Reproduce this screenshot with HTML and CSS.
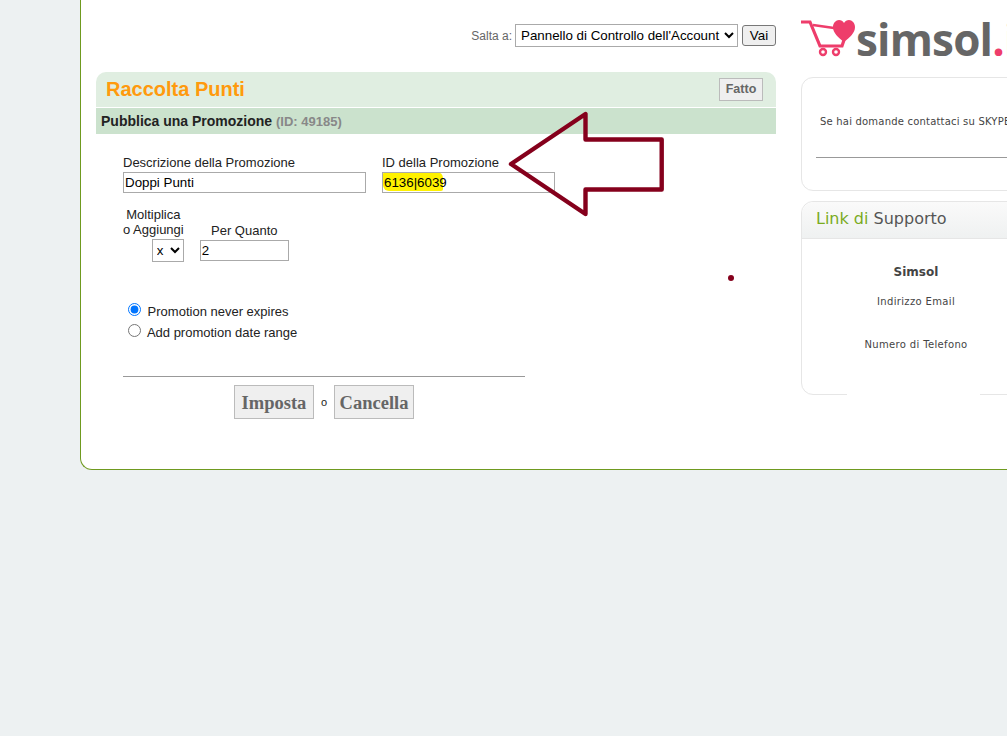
FILE: index.html
```html
<!DOCTYPE html>
<html lang="it">
<head>
    <meta charset="UTF-8">
    <meta name="viewport" content="width=device-width, initial-scale=1.0">
    <title>Raccolta Punti - Simsol</title>
    <link rel="stylesheet" href="styles.css">
</head>
<body>
    <div class="card">
        <div class="main">
            <form class="jump">
                <label class="jump-label" for="jump-select">Salta a:</label>
                <select id="jump-select" class="jump-select">
                    <option>Pannello di Controllo dell'Account</option>
                </select>
                <button type="button" class="jump-btn">Vai</button>
            </form>

            <div class="panel-title">
                <h1>Raccolta Punti</h1>
                <a href="#" class="done-btn">Fatto</a>
            </div>
            <div class="panel-sub">Pubblica una Promozione <span class="panel-id">(ID: 49185)</span></div>

            <form class="promo">
                <div class="promo-row">
                    <div class="field">
                        <label for="promo-name">Descrizione della Promozione</label>
                        <input id="promo-name" class="text-input name-input" type="text" value="Doppi Punti">
                    </div>
                    <div class="field">
                        <label for="promo-id">ID della Promozione</label>
                        <div class="id-wrap">
                            <span class="marker"></span>
                            <input id="promo-id" class="text-input id-input" type="text" value="6136|6039">
                        </div>
                    </div>
                </div>

                <div class="promo-row multiply-row">
                    <div class="field multiply">
                        <label for="promo-mode">Moltiplica<br>o Aggiungi</label>
                        <select id="promo-mode" class="mode-select">
                            <option>x</option>
                        </select>
                    </div>
                    <div class="field amount">
                        <label for="promo-amount">Per Quanto</label>
                        <input id="promo-amount" class="text-input amount-input" type="text" value="2">
                    </div>
                </div>

                <div class="dates">
                    <label class="radio"><input type="radio" name="range" checked> Promotion never expires</label>
                    <label class="radio"><input type="radio" name="range"> Add promotion date range</label>
                </div>

                <div class="actions">
                    <button type="button" class="big-btn">Imposta</button>
                    <span class="or">o</span>
                    <button type="button" class="big-btn">Cancella</button>
                </div>
            </form>
        </div>

        <aside class="side">
            <div class="logo">
                <svg class="logo-cart" width="54" height="40" viewBox="0 0 54 40">
                    <path d="M0 3H9L19 27H41L43 21" fill="none" stroke="#ee3d6b" stroke-width="3.2"/>
                    <path d="M12 6L33 9" fill="none" stroke="#ee3d6b" stroke-width="2.4"/>
                    <circle cx="22" cy="33" r="3" fill="none" stroke="#ee3d6b" stroke-width="2.4"/>
                    <circle cx="35" cy="33" r="3" fill="none" stroke="#ee3d6b" stroke-width="2.4"/>
                    <path d="M43 23C37 18 32 14 32 8C32 4 35 1 38 1C40 1 42 2 43 4C44 2 46 1 48 1C51 1 54 4 54 8C54 14 49 18 43 23Z" fill="#ee3d6b"/>
                </svg>
                <span class="logo-text">simsol<span class="logo-dot">.it</span></span>
            </div>

            <div class="box box-skype">
                <p>Se hai domande contattaci su SKYPE</p>
                <hr class="box-rule">
            </div>

            <div class="box box-support">
                <h2 class="box-head"><span class="green">Link di</span> Supporto</h2>
                <div class="support-body">
                    <h3>Simsol</h3>
                    <p class="support-email">Indirizzo Email</p>
                    <p class="support-phone">Numero di Telefono</p>
                </div>
            </div>
        </aside>
    </div>

    <!-- annotation drawn on the screenshot -->
    <svg class="arrow" width="170" height="120" viewBox="0 0 170 120">
        <path d="M3 54L77.5 4V29.5H153.7V79.5H77.5V104Z" fill="none" stroke="#85001c" stroke-width="4.4" stroke-linejoin="round"/>
    </svg>
    <span class="dot"></span>
</body>
</html>
```

FILE: styles.css
```css
* {
    margin: 0;
    padding: 0;
    box-sizing: border-box;
}

html, body {
    height: 736px;
    overflow: hidden;
}

body {
    font-family: "Liberation Sans", Arial, sans-serif;
    background: #edf1f2;
    color: #222;
    position: relative;
}

.card {
    display: flex;
    width: 1100px;
    height: 490px;
    margin: -20px 0 0 80px;
    padding-top: 20px;
    background: #fff;
    border: 1px solid #6f9a1f;
    border-right: none;
    border-radius: 12px;
}

.main {
    width: 695px;
    padding-left: 15px;
}

.jump {
    display: flex;
    justify-content: flex-end;
    align-items: center;
    height: 23px;
    margin-top: 23px;
}

.jump-label {
    font-size: 12px;
    color: #666;
    margin-right: 3px;
}

.jump-select {
    width: 223px;
    height: 23px;
    padding-left: 1px;
    font-family: "Liberation Sans", Arial, sans-serif;
    font-size: 13.33px;
    color: #000;
    background: #fff;
    border: 1px solid #aaa;
}

.jump-btn {
    width: 34px;
    height: 21px;
    margin-left: 4px;
    font-family: "Liberation Sans", Arial, sans-serif;
    font-size: 13.33px;
    color: #000;
    background: #efefef;
    border: 1px solid #777;
    border-radius: 3px;
}

.panel-title {
    display: flex;
    justify-content: space-between;
    align-items: center;
    height: 35px;
    margin-top: 25px;
    padding: 0 13px 0 10px;
    background: #e0eee1;
    border-radius: 10px 10px 0 0;
}

.panel-title h1 {
    font-size: 20px;
    font-weight: bold;
    color: #ff9a0d;
}

.done-btn {
    display: block;
    width: 44px;
    height: 23px;
    line-height: 21px;
    text-align: center;
    font-size: 12.5px;
    font-weight: bold;
    color: #666;
    text-decoration: none;
    background: #efefef;
    border: 1px solid #bbb;
}

.panel-sub {
    height: 26px;
    line-height: 26px;
    margin-top: 1px;
    padding-left: 5px;
    font-size: 14px;
    font-weight: bold;
    color: #222;
    background: #cbe2cd;
}

.panel-id {
    font-size: 13px;
    color: #888;
}

.promo {
    width: 432px;
    padding: 21px 0 0 27px;
    font-size: 13px;
}

.promo-row {
    display: flex;
    gap: 16px;
}

.field {
    display: flex;
    flex-direction: column;
}

.field label {
    line-height: 15px;
    color: #222;
}

.text-input {
    height: 21px;
    margin-top: 2px;
    font-family: "Liberation Sans", Arial, sans-serif;
    font-size: 13.33px;
    color: #000;
    padding: 0 1px;
    background: transparent;
    border: 1px solid #aaa;
}

.name-input {
    width: 243px;
}

.id-wrap {
    position: relative;
}

.id-input {
    position: relative;
    display: block;
    width: 173px;
}

.marker {
    position: absolute;
    left: 1px;
    top: 2px;
    width: 60px;
    height: 19px;
    background: #fff200;
    border-radius: 2px 6px 2px 6px;
}

.multiply-row {
    margin-top: 14px;
}

.multiply {
    align-items: flex-end;
    text-align: center;
}

.mode-select {
    width: 32px;
    height: 23px;
    margin-top: 2px;
    font-family: "Liberation Sans", Arial, sans-serif;
    font-size: 13.33px;
    color: #000;
    background: #fff;
    border: 1px solid #aaa;
}

.amount {
    justify-content: flex-end;
    text-align: center;
}

.amount-input {
    width: 89px;
    margin-bottom: 1px;
    background: #fff;
}

.dates {
    margin-top: 39px;
}

.radio {
    display: block;
    padding-left: 5px;
    height: 21px;
    line-height: 21px;
    color: #222;
}

.radio input {
    width: 13px;
    height: 13px;
    margin-right: 3px;
    vertical-align: 0;
}

.actions {
    display: flex;
    justify-content: center;
    align-items: center;
    gap: 7px;
    width: 402px;
    margin-top: 33px;
    padding-top: 8px;
    border-top: 1px solid #999;
}

.big-btn {
    width: 80px;
    height: 34px;
    padding-top: 2px;
    font-family: "Liberation Serif", "Times New Roman", serif;
    font-size: 18.5px;
    font-weight: bold;
    color: #666;
    background: #efefef;
    border: 1px solid #bbb;
}

.or {
    font-size: 11px;
    width: 6px;
}

.side {
    width: 230px;
    margin-left: 25px;
    font-family: "DejaVu Sans", Verdana, sans-serif;
    color: #444;
}

.logo {
    display: flex;
    align-items: center;
    height: 40px;
    margin-top: 18px;
    white-space: nowrap;
}

.logo-cart {
    flex: none;
}

.logo-text {
    margin-left: 1px;
    font-family: "Open Sans", sans-serif;
    font-size: 44px;
    font-weight: 700;
    line-height: 40px;
    letter-spacing: -0.8px;
    color: #666;
}

.logo-dot {
    color: #ee3d6b;
}

.box {
    position: relative;
    background: #fff;
    border: 1px solid #e6e6e6;
    border-radius: 12px;
}

.box-skype {
    height: 114px;
    margin-top: 18px;
    padding: 37px 0 0 14px;
}

.box-skype p {
    font-size: 10px;
    line-height: 14px;
    letter-spacing: 0.2px;
    padding-left: 4px;
    white-space: nowrap;
    overflow: hidden;
}

.box-rule {
    margin-top: 28px;
    border: none;
    border-top: 1px solid #999;
}

.box-support {
    height: 194px;
    margin-top: 10px;
}

/* white strip that breaks the bottom border */
.box-support::after {
    content: "";
    position: absolute;
    left: 45px;
    bottom: -1px;
    width: 133px;
    height: 1px;
    background: #fff;
}

.box-head {
    height: 37px;
    line-height: 33px;
    padding-left: 14px;
    font-size: 16px;
    font-weight: normal;
    color: #555;
    background: linear-gradient(#fafafa, #eff1f1);
    border-bottom: 1px solid #e6e6e6;
    border-radius: 12px 12px 0 0;
}

.green {
    color: #7aab1e;
}

.support-body {
    text-align: center;
    padding-top: 25px;
}

.support-body h3 {
    font-size: 12px;
    line-height: 16px;
}

.support-body p {
    font-size: 10px;
    line-height: 14px;
    letter-spacing: 0.35px;
}

.support-email {
    margin-top: 15px;
}

.support-phone {
    margin-top: 29px;
}

.arrow {
    position: absolute;
    left: 508px;
    top: 110px;
}

.dot {
    position: absolute;
    left: 728px;
    top: 275px;
    width: 6px;
    height: 6px;
    background: #85001c;
    border-radius: 50%;
}
```
